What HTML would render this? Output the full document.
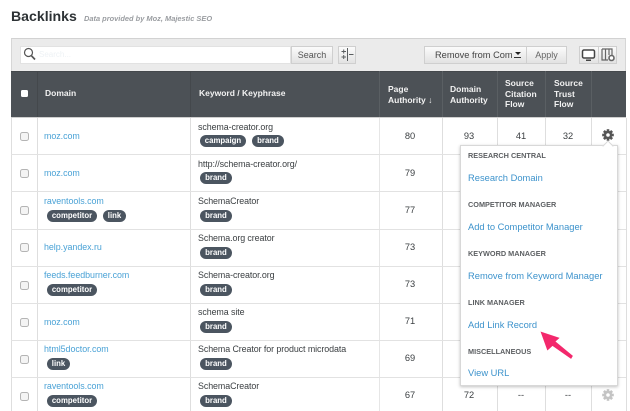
<!DOCTYPE html>
<html><head><meta charset="utf-8"><style>
html,body{margin:0;padding:0;background:#fff}
#p{position:relative;width:630px;height:411px;overflow:hidden;background:#fff;font-family:"Liberation Sans",sans-serif;font-size:9px;color:#3c4043;filter:blur(.35px)}
#p div,#p a{position:absolute;white-space:nowrap}
.v{width:1px;top:118px;height:293px;background:#dedede}
.h{left:11px;width:615px;height:1px;background:#e2e2e2}
.cb{left:20px;width:7px;height:7px;border:1px solid #b4b4b4;border-radius:2.5px;background:#f4f4f4}
.d{color:#4aa2d6;left:44px;line-height:12px;font-size:8.9px;letter-spacing:-.03px}
.k{left:198px;line-height:12px;color:#3c4043;font-size:8.9px;letter-spacing:-.08px}
.t{height:12px;line-height:12px;border-radius:6px;background:#4b5560;color:#fff;font-weight:bold;font-size:7.8px;text-align:center}
.n{line-height:12px;text-align:center;width:40px;font-size:9.3px}
.th{color:#f2f2f2;font-weight:bold;font-size:8.5px;line-height:10.5px}
.mh{left:468px;color:#5d6063;font-weight:bold;font-size:7.3px;line-height:10px}
.ml{left:468px;color:#3d93cc;font-size:9.35px;line-height:12px}
.btn{background:linear-gradient(#fbfbfb,#e2e2e2);border:1px solid #cfcfcf;box-sizing:border-box;text-align:center;color:#555}
</style></head><body><div id="p">
<div style="left:11px;top:7px;font-size:14.1px;font-weight:bold;color:#2d3235;line-height:19px">Backlinks</div>
<div style="left:84px;top:13px;font-size:7.45px;font-style:italic;font-weight:bold;color:#9a9da1;line-height:11px">Data provided by Moz, Majestic SEO</div>

<div style="left:11px;top:38px;width:615px;height:33px;background:#ebebeb;border-top:1px solid #d2d2d2;box-sizing:border-box;border-left:1px solid #d6d6d6;border-right:1px solid #d6d6d6"></div>
<div style="left:20px;top:46px;width:271px;height:18px;background:#fff;border:1px solid #e2e2e2;box-sizing:border-box"></div>
<svg style="position:absolute;left:23px;top:47px" width="13" height="14" viewBox="0 0 13 14"><circle cx="5.5" cy="5.5" r="4" fill="none" stroke="#555" stroke-width="1.2"/><path d="M8.5 8.8L12 12.5" stroke="#555" stroke-width="1.7"/></svg>
<div style="left:39px;top:49px;font-size:8px;color:#eef2f5;line-height:11px">Search...</div>
<div class="btn" style="left:291px;top:46px;width:42px;height:18px;font-size:9px;line-height:16px">Search</div>
<div class="btn" style="left:338px;top:46px;width:18px;height:18px"></div>
<svg style="position:absolute;left:341px;top:48px" width="13" height="14" viewBox="0 0 13 14"><path d="M6.5 0V13M8 6.500H12.500M0.500 3.500H5M0.500 9H5M2.700 1.500V5.500M2.700 7V11" stroke="#5a5e60" stroke-width="1" fill="none"/></svg>
<div class="btn" style="left:424px;top:46px;width:103px;height:18px;font-size:9.25px;line-height:17px;text-align:left;padding-left:10px;color:#444">Remove from Com</div>
<div style="left:515px;top:52px;width:0;height:0;border:3px solid transparent;border-top:3px solid #222;border-bottom:0"></div>
<div style="left:514px;top:57px;width:7px;height:1px;background:#333"></div>
<div class="btn" style="left:526px;top:46px;width:41px;height:18px;font-size:9px;line-height:17px;color:#666">Apply</div>
<div class="btn" style="left:579px;top:46px;width:20px;height:18px"></div>
<div class="btn" style="left:598px;top:46px;width:19px;height:18px"></div>
<svg style="position:absolute;left:581px;top:49px" width="16" height="13" viewBox="0 0 16 13"><rect x="1.500" y="1" width="12" height="8" rx="1.500" fill="#fff" stroke="#444" stroke-width="1.500"/><path d="M5 10.500H10V12H5Z" fill="#444"/></svg>
<svg style="position:absolute;left:601px;top:48px" width="15" height="14" viewBox="0 0 15 14"><path d="M1 1H11V7M7 12H1V1M4.500 1V12M8 1V7" fill="none" stroke="#666" stroke-width="1.200"/><circle cx="10.500" cy="10" r="2.500" fill="#fff" stroke="#666" stroke-width="1.600"/></svg>

<div style="left:11px;top:71px;width:615px;height:46px;background:#4c5156;border-top:1px solid #44484c;box-sizing:border-box"></div>
<div style="left:11px;top:117px;width:615px;height:1px;background:#cfcfcf"></div>
<div style="left:37px;top:71px;width:1px;height:46px;background:#44484c"></div>
<div style="left:190px;top:71px;width:1px;height:46px;background:#44484c"></div>
<div style="left:379px;top:71px;width:1px;height:46px;background:#5a5f63"></div>
<div style="left:442px;top:71px;width:1px;height:46px;background:#5a5f63"></div>
<div style="left:497px;top:71px;width:1px;height:46px;background:#5a5f63"></div>
<div style="left:545px;top:71px;width:1px;height:46px;background:#5a5f63"></div>
<div style="left:591px;top:71px;width:1px;height:46px;background:#5a5f63"></div>
<div style="left:21px;top:90px;width:7px;height:7px;background:#fff;border-radius:1.500px"></div>
<div class="th" style="left:45px;top:88px">Domain</div>
<div class="th" style="left:199px;top:88px">Keyword / Keyphrase</div>
<div class="th" style="left:388px;top:84px">Page<br>Authority ↓</div>
<div class="th" style="left:450px;top:84px">Domain<br>Authority</div>
<div class="th" style="left:505px;top:78px">Source<br>Citation<br>Flow</div>
<div class="th" style="left:554px;top:78px">Source<br>Trust<br>Flow</div>

<div class="v" style="left:11px"></div><div class="v" style="left:37px"></div><div class="v" style="left:190px"></div><div class="v" style="left:379px;background:#e6e6e6"></div><div class="v" style="left:442px"></div><div class="v" style="left:497px"></div><div class="v" style="left:545px"></div><div class="v" style="left:591px"></div><div class="v" style="left:626px"></div>
<div class="h" style="top:154px"></div><div class="h" style="top:191px"></div><div class="h" style="top:229px"></div><div class="h" style="top:266px"></div><div class="h" style="top:303px"></div><div class="h" style="top:340px"></div><div class="h" style="top:377px"></div>

<div class="cb" style="top:132px"></div><div class="cb" style="top:169px"></div><div class="cb" style="top:206px"></div><div class="cb" style="top:243px"></div><div class="cb" style="top:281px"></div><div class="cb" style="top:318px"></div><div class="cb" style="top:355px"></div><div class="cb" style="top:392px"></div>

<a class="d" style="top:130px">moz.com</a>
<a class="d" style="top:167px">moz.com</a>
<a class="d" style="top:195px">raventools.com</a>
<div class="t" style="left:47px;top:210px;width:50px">competitor</div><div class="t" style="left:103px;top:210px;width:23px">link</div>
<a class="d" style="top:241px">help.yandex.ru</a>
<a class="d" style="top:269px">feeds.feedburner.com</a>
<div class="t" style="left:47px;top:284px;width:50px">competitor</div>
<a class="d" style="top:316px">moz.com</a>
<a class="d" style="top:343px">html5doctor.com</a>
<div class="t" style="left:47px;top:358px;width:23px">link</div>
<a class="d" style="top:380px">raventools.com</a>
<div class="t" style="left:47px;top:395px;width:50px">competitor</div>

<div class="k" style="top:121px">schema-creator.org</div>
<div class="t" style="left:200px;top:135px;width:46px">campaign</div><div class="t" style="left:252px;top:135px;width:32px">brand</div>
<div class="k" style="top:158px">http://schema-creator.org/</div><div class="t" style="left:200px;top:172px;width:32px">brand</div>
<div class="k" style="top:195px">SchemaCreator</div><div class="t" style="left:200px;top:210px;width:32px">brand</div>
<div class="k" style="top:232px">Schema.org creator</div><div class="t" style="left:200px;top:247px;width:32px">brand</div>
<div class="k" style="top:269px">Schema-creator.org</div><div class="t" style="left:200px;top:284px;width:32px">brand</div>
<div class="k" style="top:306px">schema site</div><div class="t" style="left:200px;top:321px;width:32px">brand</div>
<div class="k" style="top:343px">Schema Creator for product microdata</div><div class="t" style="left:200px;top:358px;width:32px">brand</div>
<div class="k" style="top:380px">SchemaCreator</div><div class="t" style="left:200px;top:395px;width:32px">brand</div>

<div class="n" style="left:390px;top:130px">80</div><div class="n" style="left:390px;top:167px">79</div><div class="n" style="left:390px;top:204px">77</div><div class="n" style="left:390px;top:241px">73</div><div class="n" style="left:390px;top:278px">73</div><div class="n" style="left:390px;top:315px">71</div><div class="n" style="left:390px;top:352px">69</div><div class="n" style="left:390px;top:389px">67</div>
<div class="n" style="left:449px;top:130px">93</div><div class="n" style="left:449px;top:389px">72</div>
<div class="n" style="left:501px;top:130px">41</div><div class="n" style="left:501px;top:389px">--</div>
<div class="n" style="left:548px;top:130px">32</div><div class="n" style="left:548px;top:389px">--</div>

<svg style="position:absolute;left:602px;top:129px" width="12" height="12" viewBox="-6 -6 12 12"><g fill="#555"><circle r="4.200"/><rect x="-1.300" y="-5.800" width="2.600" height="11.600"/><rect x="-1.300" y="-5.800" width="2.600" height="11.600" transform="rotate(45)"/><rect x="-1.300" y="-5.800" width="2.600" height="11.600" transform="rotate(90)"/><rect x="-1.300" y="-5.800" width="2.600" height="11.600" transform="rotate(135)"/></g><circle r="1.800" fill="#fff"/></svg>
<svg style="position:absolute;left:602px;top:389px" width="12" height="12" viewBox="-6 -6 12 12"><g fill="#c4c4c4"><circle r="4.200"/><rect x="-1.300" y="-5.800" width="2.600" height="11.600"/><rect x="-1.300" y="-5.800" width="2.600" height="11.600" transform="rotate(45)"/><rect x="-1.300" y="-5.800" width="2.600" height="11.600" transform="rotate(90)"/><rect x="-1.300" y="-5.800" width="2.600" height="11.600" transform="rotate(135)"/></g><circle r="1.800" fill="#fff"/></svg>

<div style="left:460px;top:145px;width:158px;height:241px;background:#fff;border:1px solid #d8d8d8;box-sizing:border-box;box-shadow:0 1px 3px rgba(0,0,0,.25)"></div>
<div style="left:604px;top:142px;width:7px;height:7px;background:#fff;border-left:1px solid #d8d8d8;border-top:1px solid #d8d8d8;transform:rotate(45deg)"></div>
<div class="mh" style="top:151px">RESEARCH CENTRAL</div>
<a class="ml" style="top:172px">Research Domain</a>
<div class="mh" style="top:200px">COMPETITOR MANAGER</div>
<a class="ml" style="top:221px">Add to Competitor Manager</a>
<div class="mh" style="top:249px">KEYWORD MANAGER</div>
<a class="ml" style="top:270px">Remove from Keyword Manager</a>
<div class="mh" style="top:298px">LINK MANAGER</div>
<a class="ml" style="top:319px">Add Link Record</a>
<div class="mh" style="top:347px">MISCELLANEOUS</div>
<a class="ml" style="top:367px">View URL</a>

<svg style="position:absolute;left:535px;top:325px" width="40" height="36" viewBox="0 0 40 36"><path d="M6 7L24 13L20 16.500L37.500 31L36 33.500L17.500 20.500L12.500 25Z" fill="#f3286c" stroke="#f3286c" stroke-width=".6"/></svg>
</div></body></html>
